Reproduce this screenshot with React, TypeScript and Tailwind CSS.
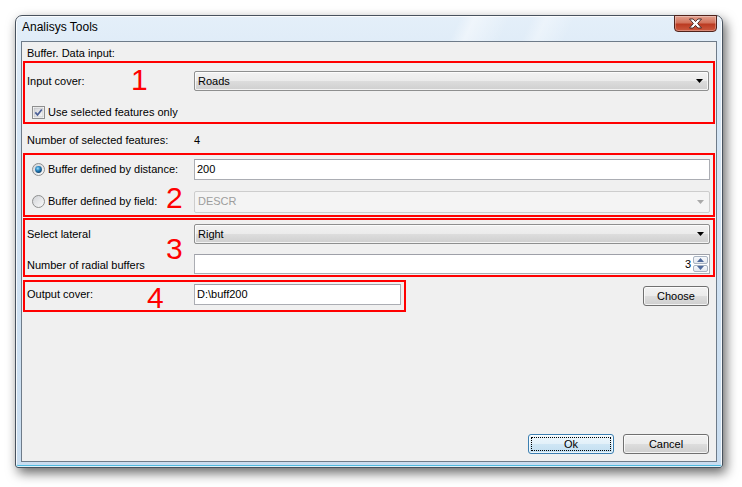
import React from 'react';

const btnFace =
  'bg-[linear-gradient(#f2f2f2,#ebebeb_50%,#dddddd_50%,#cfcfcf)] shadow-[inset_0_0_0_1px_rgba(255,255,255,0.75)]';

function DownArrow({ disabled }: { disabled?: boolean }) {
  return (
    <svg width="7" height="4" viewBox="0 0 7 4">
      <path d="M0 0h7L3.5 4z" fill={disabled ? '#a9a9a9' : '#000'} />
    </svg>
  );
}

function Combo({ value, disabled, className = '' }: { value: string; disabled?: boolean; className?: string }) {
  return (
    <div
      className={`flex items-center justify-between rounded-[2px] border pl-[3px] pr-[5px] ${
        disabled
          ? 'border-[#cdcdcd] bg-[#f4f4f4] text-[#9d9d9d]'
          : `border-[#8e8f8f] text-black ${btnFace}`
      } ${className}`}
    >
      <span>{value}</span>
      <DownArrow disabled={disabled} />
    </div>
  );
}

function TextBox({ value, className = '' }: { value: string; className?: string }) {
  return (
    <div
      className={`flex items-center border border-[#abadb3] border-t-[#9ea0a8] bg-white pl-[2px] text-black ${className}`}
    >
      {value}
    </div>
  );
}

function CheckBox() {
  return (
    <svg width="13" height="13" viewBox="0 0 13 13" className="shrink-0">
      <defs>
        <linearGradient id="cbg" x1="0" y1="0" x2="1" y2="1">
          <stop offset="0" stopColor="#d2d4d8" />
          <stop offset="1" stopColor="#f7f7f7" />
        </linearGradient>
      </defs>
      <rect x="0.5" y="0.5" width="12" height="12" fill="#fff" stroke="#8e8f8f" />
      <rect x="2" y="2" width="9" height="9" fill="url(#cbg)" stroke="#b4b6ba" strokeWidth="0.6" />
      <path d="M3.3 6.4 5.5 8.9 9.8 3.4" fill="none" stroke="#4a5f97" strokeWidth="1.7" />
    </svg>
  );
}

function Radio({ checked }: { checked?: boolean }) {
  return (
    <svg width="13" height="13" viewBox="0 0 13 13" className="shrink-0">
      <defs>
        <linearGradient id="rbg" x1="0" y1="0" x2="1" y2="1">
          <stop offset="0" stopColor="#d0d2d6" />
          <stop offset="1" stopColor="#fbfbfb" />
        </linearGradient>
        <radialGradient id="rdot" cx="0.4" cy="0.35" r="0.7">
          <stop offset="0" stopColor="#9ee0fb" />
          <stop offset="0.45" stopColor="#2a86c2" />
          <stop offset="1" stopColor="#0b3a63" />
        </radialGradient>
      </defs>
      <circle cx="6.5" cy="6.5" r="6" fill="url(#rbg)" stroke="#8e8f8f" />
      {checked && <circle cx="6.5" cy="6.5" r="3.4" fill="url(#rdot)" />}
    </svg>
  );
}

function Numeral({ n, className }: { n: string; className: string }) {
  return (
    <span className={`pointer-events-none absolute text-[30px] leading-[30px] text-[#ff0000] ${className}`}>{n}</span>
  );
}

function Button({ label, focused }: { label: string; focused?: boolean }) {
  return (
    <div
      className={`relative flex h-[20px] w-[86px] items-center justify-center rounded-[3px] border text-black ${
        focused
          ? 'border-[#3c7fb1] bg-[linear-gradient(#eef7fc,#e2f0f9_50%,#cfe6f5_50%,#c2def0)] shadow-[inset_0_0_0_1px_rgba(255,255,255,0.7)]'
          : `border-[#707070] ${btnFace}`
      }`}
    >
      {label}
      {focused && <div className="absolute inset-[2px] border border-dotted border-black" />}
    </div>
  );
}

export default function App() {
  return (
    <div className="h-[487px] w-[742px] overflow-hidden bg-white pl-[15px] pt-[15px] font-['Liberation_Sans',Arial,sans-serif] text-[11px] leading-[13px]">
      <div className="relative flex h-[453px] w-[708px] flex-col rounded-t-[7px] rounded-b-[3px] border border-[#48525e] bg-[linear-gradient(180deg,#e4eff9_0%,#d6e6f5_20%,#c9ddf0_100%)] shadow-[3px_5px_12px_rgba(0,0,0,0.6),inset_0_0_0_1px_rgba(255,255,255,0.8),inset_0_-2px_0_#4fbadf]">
        {/* Title bar */}
        <div className="flex h-[25px] shrink-0 pl-[6px] pt-[3px] bg-[linear-gradient(115deg,transparent_62%,rgba(255,255,255,0.45)_64%,transparent_69%,transparent_72%,rgba(255,255,255,0.35)_74%,transparent_78%)]">
          <span className="text-[12px] leading-[16px] text-black">Analisys Tools</span>
        </div>

        {/* Close button */}
        <div className="absolute right-[5px] top-[-1px] flex h-[17px] w-[43px] items-center justify-center rounded-b-[4px] border border-[#4f231c] bg-[linear-gradient(#e3a08e,#d2735c_45%,#bb3b22_55%,#cb5a40)] shadow-[inset_0_0_0_1px_rgba(255,255,255,0.3)]">
          <svg width="15" height="11" viewBox="0 0 15 11">
            <path
              d="M1.5 1h3.6l2.4 2.6L9.9 1h3.6L9.6 5.5l3.9 4.5H9.9L7.5 7.4 5.1 10H1.5l3.9-4.5z"
              fill="#fff"
              stroke="#3e2320"
              strokeWidth="0.9"
              strokeLinejoin="round"
            />
          </svg>
        </div>

        {/* Client area */}
        <div className="mx-[5px] mb-[5px] flex flex-1 flex-col border border-[#6e7b89] bg-[#f0f0f0] px-[1px] pb-[7px]">
          <div className="h-[19px] pl-[4px] pt-[5px]">Buffer. Data input:</div>

          {/* 1 */}
          <div className="relative h-[63px] border-2 border-[#ff0000] pl-[2px] pr-[4px] pt-[8px]">
            <div className="flex h-[20px] items-center">
              <span className="w-[167px] shrink-0">Input cover:</span>
              <Combo value="Roads" className="h-[20px] flex-1" />
            </div>
            <div className="mt-[15px] flex h-[13px] items-center pl-[5px]">
              <CheckBox />
              <span className="ml-[3px]">Use selected features only</span>
            </div>
            <Numeral n="1" className="left-[106px] top-[2px]" />
          </div>

          <div className="flex h-[29px] pl-[4px] pt-[10px]">
            <span className="w-[167px] shrink-0">Number of selected features:</span>
            <span>4</span>
          </div>

          {/* 2 */}
          <div className="relative h-[64px] border-2 border-[#ff0000] pr-[3px] pt-[4px]">
            <div className="flex h-[21px] items-center">
              <div className="flex w-[169px] shrink-0 items-center pl-[7px]">
                <Radio checked />
                <span className="ml-[3px]">Buffer defined by distance:</span>
              </div>
              <TextBox value="200" className="h-[21px] flex-1" />
            </div>
            <div className="mt-[11px] flex h-[21px] items-center">
              <div className="flex w-[169px] shrink-0 items-center pl-[7px]">
                <Radio />
                <span className="ml-[3px]">Buffer defined by field:</span>
              </div>
              <Combo value="DESCR" disabled className="h-[22px] flex-1" />
            </div>
            <Numeral n="2" className="left-[141px] top-[28px]" />
          </div>

          {/* 3 */}
          <div className="relative mt-[1px] h-[59px] border-2 border-[#ff0000] pl-[2px] pr-[3px] pt-[4px]">
            <div className="flex h-[20px] items-center">
              <span className="w-[167px] shrink-0">Select lateral</span>
              <Combo value="Right" className="h-[20px] flex-1" />
            </div>
            <div className="mt-[10px] flex h-[20px] items-center">
              <span className="w-[167px] shrink-0 pt-[3px]">Number of radial buffers</span>
              <div className="flex h-[20px] flex-1 items-center justify-end border border-[#abadb3] border-t-[#9ea0a8] bg-white pr-[1px]">
                <span className="mr-[2px]">3</span>
                <div className="flex h-[16px] w-[15px] flex-col gap-[1px]">
                  <div className="flex flex-1 items-center justify-center rounded-[2px] border border-[#a9b4c2] bg-[linear-gradient(#f7f9fc,#e3e8ef)]">
                    <svg width="7" height="4" viewBox="0 0 7 4">
                      <path d="M0 4h7L3.5 0z" fill="#4f6a9c" />
                    </svg>
                  </div>
                  <div className="flex flex-1 items-center justify-center rounded-[2px] border border-[#a9b4c2] bg-[linear-gradient(#f7f9fc,#e3e8ef)]">
                    <svg width="7" height="4" viewBox="0 0 7 4">
                      <path d="M0 0h7L3.5 4z" fill="#4f6a9c" />
                    </svg>
                  </div>
                </div>
              </div>
            </div>
            <Numeral n="3" className="left-[141px] top-[14px]" />
          </div>

          {/* 4 + Choose */}
          <div className="mt-[3px] flex items-start">
            <div className="relative h-[32px] w-[383px] border-2 border-[#ff0000] pl-[2px] pr-[3px] pt-[2px]">
              <div className="flex h-[21px] items-center">
                <span className="w-[167px] shrink-0">Output cover:</span>
                <TextBox value="D:\buff200" className="h-[21px] flex-1" />
              </div>
              <Numeral n="4" className="left-[122px] top-[1px]" />
            </div>
            <div className="ml-auto mr-[6px] mt-[6px] flex h-[20px] w-[66px] items-center justify-center rounded-[3px] border border-[#707070] bg-[linear-gradient(#f2f2f2,#ebebeb_50%,#dddddd_50%,#cfcfcf)] shadow-[inset_0_0_0_1px_rgba(255,255,255,0.75)]">
              Choose
            </div>
          </div>

          <div className="flex-1" />

          <div className="mr-[6px] flex justify-end gap-[9px]">
            <Button label="Ok" focused />
            <Button label="Cancel" />
          </div>
        </div>
      </div>
    </div>
  );
}
